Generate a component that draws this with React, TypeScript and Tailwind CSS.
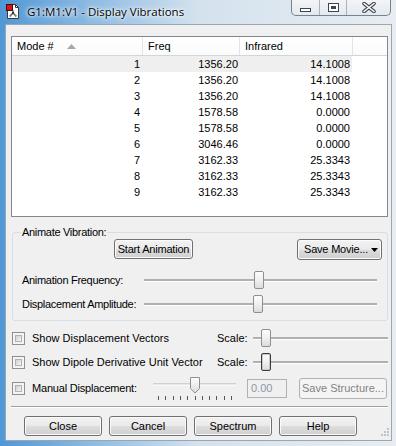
import React from 'react'

const rows = [
    ['1', '1356.20', '14.1008'],
    ['2', '1356.20', '14.1008'],
    ['3', '1356.20', '14.1008'],
    ['4', '1578.58', '0.0000'],
    ['5', '1578.58', '0.0000'],
    ['6', '3046.46', '0.0000'],
    ['7', '3162.33', '25.3343'],
    ['8', '3162.33', '25.3343'],
    ['9', '3162.33', '25.3343'],
]

interface IBtn {
    children: React.ReactNode
    className?: string
    disabled?: boolean
}

function Btn(props: IBtn) {
    return (
        <div
            className={
                'flex items-center justify-center whitespace-nowrap rounded-[3px] border ' +
                (props.disabled
                    ? 'border-[#adb2b5] bg-[#f4f4f4] text-[#838383] '
                    : 'border-[#707070] bg-[linear-gradient(180deg,#f2f2f2_0%,#ebebeb_48%,#dddddd_52%,#cfcfcf_100%)] shadow-[inset_0_0_0_1px_#fbfbfb] ') +
                (props.className ?? '')
            }
        >
            {props.children}
        </div>
    )
}

function Check() {
    return (
        <div className="w-[13px] h-[13px] border border-[#8e8f8f] bg-[#f4f4f4] p-[2px]">
            <div className="w-full h-full border border-[#aeb3b9] bg-[linear-gradient(135deg,#cbcfd5_0%,#f6f6f6_100%)]" />
        </div>
    )
}

function Thumb({ left, dark }: { left: number; dark?: boolean }) {
    return (
        <div
            className={
                'absolute top-1/2 -translate-y-1/2 w-[10px] h-[18px] rounded-[2px] border bg-[linear-gradient(180deg,#fdfdfd_0%,#f0f0f0_50%,#dcdcdc_100%)] ' +
                (dark ? 'border-[#3c3c3c] shadow-[inset_0_0_0_1px_#c9c9c9]' : 'border-[#8f8f8f]')
            }
            style={{ left }}
        />
    )
}

function Slider({ width, left, dark }: { width: number; left: number; dark?: boolean }) {
    return (
        <div className="relative h-full flex items-center" style={{ width }}>
            <div className="w-full h-[2px] bg-[#b0b0b0] shadow-[0_1px_0_#ffffff]" />
            <Thumb left={left} dark={dark} />
        </div>
    )
}

function DocIcon() {
    return (
        <svg width="14" height="15" viewBox="0 0 14 15">
            <path d="M1.5 0.5 H9.5 L12.5 3.5 V14.5 H1.5 Z" fill="#ffffff" stroke="#3a3a3a" />
            <path d="M9.5 0.5 V3.5 H12.5" fill="none" stroke="#3a3a3a" />
            <rect x="0.5" y="0.5" width="6" height="6" fill="#e01010" stroke="#3a1010" />
            <path d="M7 6 V9 M7 9 L4.5 11.5 M7 9 L9.5 11.5" stroke="#555" strokeWidth="1.2" fill="none" />
            <circle cx="7" cy="9" r="1.2" fill="#333" />
            <circle cx="4.3" cy="11.8" r="1.1" fill="#777" />
            <circle cx="9.7" cy="11.8" r="1.1" fill="#777" />
        </svg>
    )
}

function CaptionButtons() {
    return (
        <div className="absolute top-0 left-[291px] w-[100px] h-[16px] flex rounded-b-[5px] border border-t-0 border-[#76828e] bg-[linear-gradient(180deg,#f3f5f7_0%,#e4e9ee_100%)] overflow-hidden">
            <div className="w-[28px] h-full flex items-center justify-center border-r border-[#a9b3bd]">
                <div className="mt-[5px] w-[11px] h-[4px] border border-[#3c4650] bg-white" />
            </div>
            <div className="w-[27px] h-full flex items-center justify-center border-r border-[#a9b3bd]">
                <div className="w-[11px] h-[9px] border border-[#3c4650] bg-white p-[2px]">
                    <div className="w-full h-full border border-[#3c4650] border-t-2" />
                </div>
            </div>
            <div className="flex-1 h-full flex items-center justify-center">
                <svg width="14" height="11" viewBox="0 0 14 11">
                    <path d="M2 1.5 L12 9.5 M12 1.5 L2 9.5" stroke="#3c4650" strokeWidth="3.6" strokeLinecap="round" />
                    <path d="M2 1.5 L12 9.5 M12 1.5 L2 9.5" stroke="#ffffff" strokeWidth="1.6" strokeLinecap="round" />
                </svg>
            </div>
        </div>
    )
}

export default function App() {
    return (
        <div className="relative w-[396px] h-[446px] overflow-hidden bg-[linear-gradient(90deg,#4f97d6_0%,#94bfe4_26%,#d4e2ee_50%,#e7edf2_100%)] font-['Liberation_Sans',Arial,sans-serif] text-[11px] leading-[13px] text-black">
            {/* title bar */}
            <div className="h-[24px] flex items-center pl-[6px] pb-[2px]">
                <DocIcon />
                <span className="ml-[7px] font-['Open_Sans',sans-serif] text-[11.5px] [text-shadow:0_0_8px_#ffffff,0_0_4px_#ffffff,0_0_2px_#ffffff]">
                    G1:M1:V1 - Display Vibrations
                </span>
            </div>
            <CaptionButtons />

            {/* client */}
            <div className="relative ml-[5px] w-[387px] h-[417px] border border-[#9aa6b2] bg-[#f0f0f0]">
                {/* list */}
                <div className="mt-[11px] ml-[5px] w-[377px] h-[181px] border border-[#828790] bg-white">
                    <div className="flex h-[19px] border-b border-[#d5d5d5] bg-[linear-gradient(180deg,#ffffff_0%,#fafbfc_100%)]">
                        <div className="w-[131px] border-r border-[#e3e5e8] flex items-center pl-[5px]">
                            <span>Mode #</span>
                            <svg width="9" height="5" viewBox="0 0 9 5" className="ml-[13px]">
                                <path d="M0 5 L4.5 0 L9 5 Z" fill="#a8a8a8" />
                            </svg>
                        </div>
                        <div className="w-[97px] border-r border-[#e3e5e8] flex items-center pl-[5px]">Freq</div>
                        <div className="w-[113px] border-r border-[#e3e5e8] flex items-center pl-[5px]">Infrared</div>
                        <div className="flex-1" />
                    </div>
                    {rows.map((r, i) => (
                        <div key={r[0]} className={'flex w-[340px] h-[16px] items-center ' + (i === 0 ? 'bg-[#efefef]' : '')}>
                            <div className="w-[131px] text-right pr-[3px]">{r[0]}</div>
                            <div className="w-[97px] text-right pr-[2px]">{r[1]}</div>
                            <div className="w-[112px] text-right pr-[2px]">{r[2]}</div>
                        </div>
                    ))}
                </div>

                {/* animate vibration group */}
                <fieldset className="mt-[9px] ml-[6px] w-[376px] h-[95px] border border-[#d5dfe5] rounded-[3px] tracking-[-0.3px]">
                    <legend className="ml-[8px] px-[1px] leading-[13px]">Animate Vibration:</legend>
                    <div className="flex h-[21px] items-start tracking-normal">
                        <Btn className="ml-[101px] w-[79px] h-[20px] tracking-[-0.2px]">Start Animation</Btn>
                        <Btn className="ml-auto mr-[5px] w-[85px] h-[21px] !justify-start pl-[6px] tracking-[-0.2px]">
                            <span>Save Movie...</span>
                            <svg width="7" height="4" viewBox="0 0 7 4" className="ml-[3px]">
                                <path d="M0 0 H7 L3.5 4 Z" fill="#000" />
                            </svg>
                        </Btn>
                    </div>
                    <div className="mt-[11px] h-[18px] flex items-center pl-[9px]">
                        <span className="w-[122px] whitespace-nowrap">Animation Frequency:</span>
                        <Slider width={233} left={110} />
                    </div>
                    <div className="mt-[6px] h-[18px] flex items-center pl-[9px]">
                        <span className="w-[122px] whitespace-nowrap">Displacement Amplitude:</span>
                        <Slider width={233} left={109} />
                    </div>
                </fieldset>

                {/* options */}
                <div className="mt-[7px] h-[20px] flex items-center pl-[6px]">
                    <Check />
                    <span className="ml-[7px] w-[185px] whitespace-nowrap">Show Displacement Vectors</span>
                    <span className="w-[36px]">Scale:</span>
                    <Slider width={135} left={8} />
                </div>
                <div className="mt-[4px] h-[20px] flex items-center pl-[6px]">
                    <Check />
                    <span className="ml-[7px] w-[185px] whitespace-nowrap">Show Dipole Derivative Unit Vector</span>
                    <span className="w-[36px]">Scale:</span>
                    <Slider width={135} left={8} dark />
                </div>
                <div className="mt-[6px] h-[21px] flex items-center pl-[6px]">
                    <Check />
                    <span className="ml-[7px] w-[121px] whitespace-nowrap tracking-[-0.2px]">Manual Displacement:</span>
                    <svg width="83" height="24" viewBox="0 0 83 24" className="self-start -mt-[2px]">
                        <rect x="0" y="7.5" width="83" height="1" fill="#b0b0b0" />
                        <rect x="0" y="8.5" width="83" height="1" fill="#ffffff" />
                        {Array.from({ length: 11 }).map((_, i) => (
                            <rect key={i} x={Math.round(5 + i * 7.3)} y="20" width="1" height="4" fill="#555" />
                        ))}
                        <defs>
                            <linearGradient id="tg" x1="0" y1="0" x2="0" y2="1">
                                <stop offset="0" stopColor="#fdfdfd" />
                                <stop offset="1" stopColor="#dcdcdc" />
                            </linearGradient>
                        </defs>
                        <path d="M37.5 1.5 H46.5 V12.5 L42 17 L37.5 12.5 Z" fill="url(#tg)" stroke="#8f8f8f" />
                    </svg>
                    <div className="ml-[11px] w-[40px] h-[19px] border border-[#adb2b5] bg-[#f0f0f0] text-[#8a97a6] flex items-center pl-[3px]">0.00</div>
                    <Btn disabled className="ml-[12px] w-[88px] h-[21px]">Save Structure...</Btn>
                </div>

                <div className="mt-[7px] ml-[5px] w-[377px] h-[2px] border-t border-[#a0a0a0] border-b border-b-white" />

                <div className="mt-[8px] flex gap-[7px] pl-[18px]">
                    <Btn className="w-[78px] h-[20px]">Close</Btn>
                    <Btn className="w-[78px] h-[20px]">Cancel</Btn>
                    <Btn className="w-[78px] h-[20px]">Spectrum</Btn>
                    <Btn className="w-[78px] h-[20px]">Help</Btn>
                </div>

                <svg width="8" height="8" viewBox="0 0 8 8" className="absolute right-[2px] bottom-[4px]">
                    <rect x="6" y="0" width="2" height="2" fill="#c0c4c8" />
                    <rect x="3" y="3" width="2" height="2" fill="#c0c4c8" />
                    <rect x="6" y="3" width="2" height="2" fill="#c0c4c8" />
                    <rect x="0" y="6" width="2" height="2" fill="#c0c4c8" />
                    <rect x="3" y="6" width="2" height="2" fill="#c0c4c8" />
                    <rect x="6" y="6" width="2" height="2" fill="#c0c4c8" />
                </svg>
            </div>
        </div>
    )
}
